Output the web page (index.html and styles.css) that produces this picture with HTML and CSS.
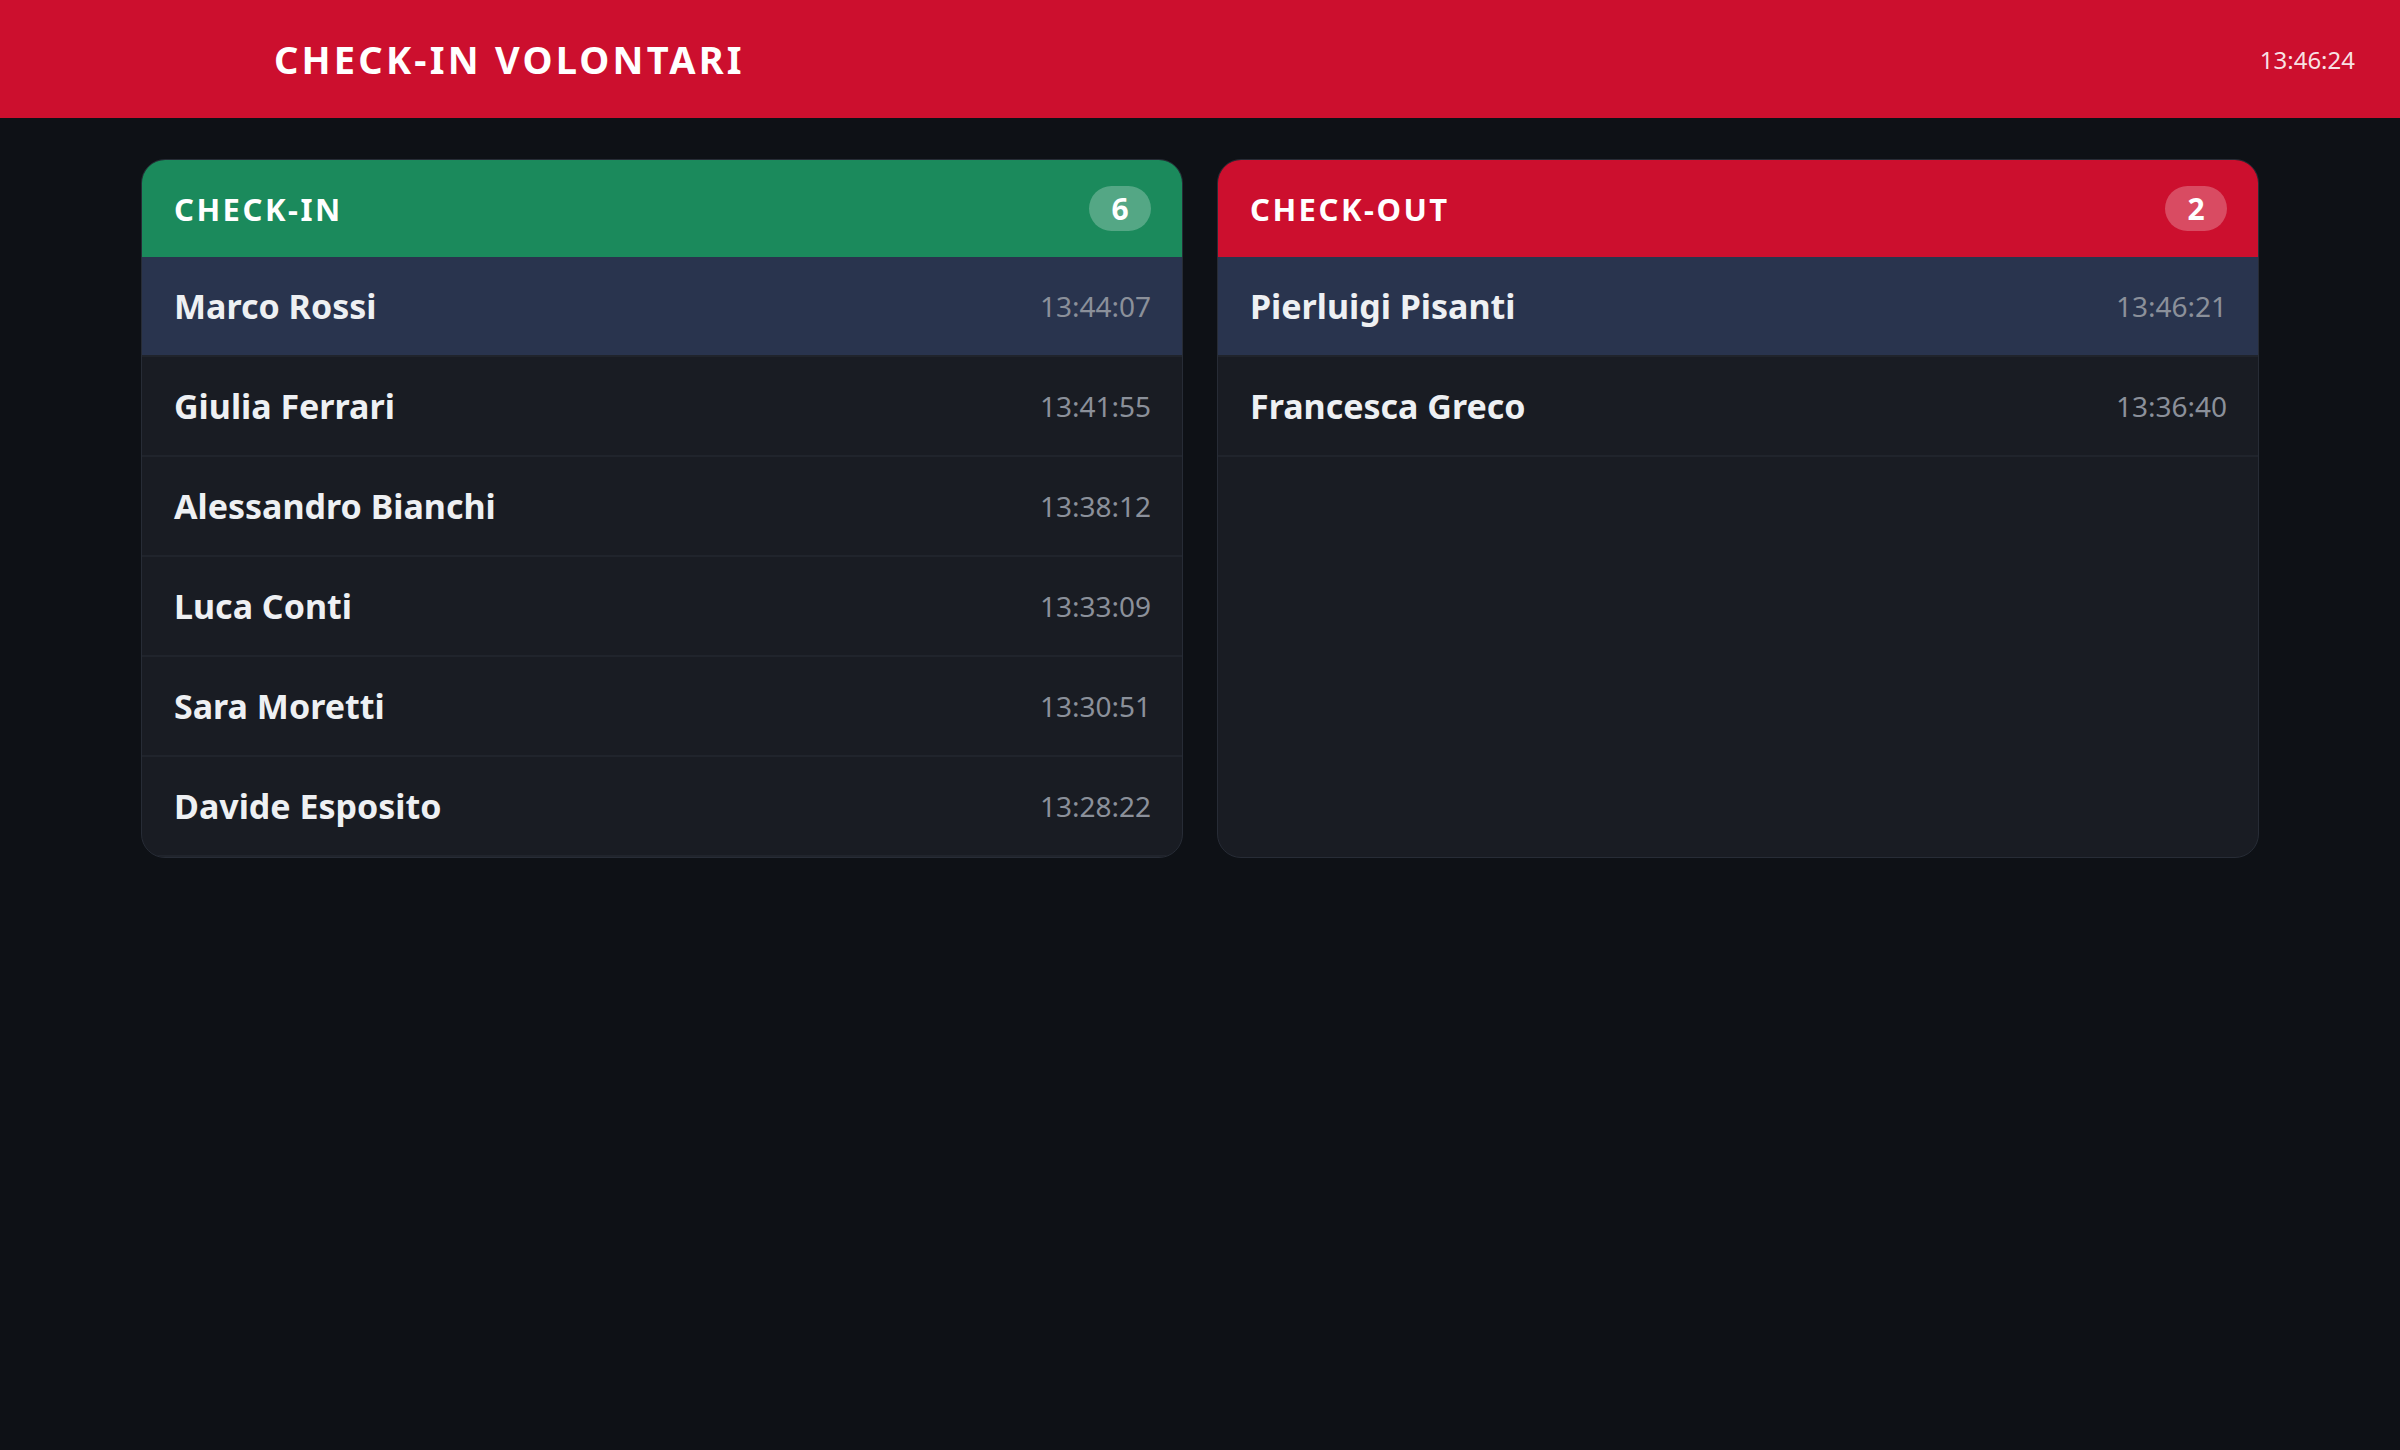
FILE: index.html
```html
<!DOCTYPE html>
<html lang="it">
<head>
  <meta charset="UTF-8">
  <meta name="viewport" content="width=device-width, initial-scale=1">
  <title>Check-in Volontari</title>
  <link rel="stylesheet" href="styles.css">
</head>
<body>
  <header class="topbar">
    <h1 class="topbar-title">CHECK-IN VOLONTARI</h1>
    <div class="topbar-clock" id="clock">13:46:24</div>
  </header>

  <main class="boards">
    <section class="board board-in">
      <div class="board-head">
        <h2>CHECK-IN</h2>
        <span class="count">6</span>
      </div>
      <ul class="board-list">
        <li class="entry latest"><span class="name">Marco Rossi</span><span class="time">13:44:07</span></li>
        <li class="entry"><span class="name">Giulia Ferrari</span><span class="time">13:41:55</span></li>
        <li class="entry"><span class="name">Alessandro Bianchi</span><span class="time">13:38:12</span></li>
        <li class="entry"><span class="name">Luca Conti</span><span class="time">13:33:09</span></li>
        <li class="entry"><span class="name">Sara Moretti</span><span class="time">13:30:51</span></li>
        <li class="entry"><span class="name">Davide Esposito</span><span class="time">13:28:22</span></li>
      </ul>
    </section>

    <section class="board board-out">
      <div class="board-head">
        <h2>CHECK-OUT</h2>
        <span class="count">2</span>
      </div>
      <ul class="board-list">
        <li class="entry latest"><span class="name">Pierluigi Pisanti</span><span class="time">13:46:21</span></li>
        <li class="entry"><span class="name">Francesca Greco</span><span class="time">13:36:40</span></li>
      </ul>
    </section>
  </main>
</body>
</html>
```

FILE: styles.css
```css
* {
  margin: 0;
  padding: 0;
  box-sizing: border-box;
  font-family: 'Noto Sans', 'Open Sans', sans-serif;
}

body {
  background-color: #0e1116;
  min-height: 100vh;
  color: #eef0f3;
}

.topbar {
  height: 118px;
  background-color: #cc0f2e;
  display: flex;
  align-items: center;
  justify-content: space-between;
  padding: 0 45px 0 274px;
}

.topbar-title {
  color: #fff;
  font-size: 38px;
  font-weight: 700;
  letter-spacing: 3.2px;
}

.topbar-clock {
  color: rgba(255, 255, 255, 0.88);
  font-size: 24px;
}

.boards {
  display: grid;
  grid-template-columns: 1fr 1fr;
  gap: 34px;
  padding: 41px 141px 0 141px;
}

.board {
  background-color: #191c23;
  border: 1.5px solid #272c36;
  border-radius: 24px;
  overflow: hidden;
}

.board-head {
  height: 97px;
  display: flex;
  align-items: center;
  justify-content: space-between;
  padding: 0 31px 0 32px;
}

.board-in .board-head {
  background-color: #1b8a5c;
}

.board-out .board-head {
  background-color: #cc0f2e;
}

.board-head h2 {
  color: #fff;
  font-size: 31px;
  font-weight: 700;
  letter-spacing: 2.5px;
}

.count {
  min-width: 62px;
  height: 45px;
  border-radius: 23px;
  background-color: rgba(255, 255, 255, 0.25);
  color: #fff;
  font-size: 30px;
  font-weight: 700;
  display: flex;
  align-items: center;
  justify-content: center;
  padding: 0 18px;
}

.board-list {
  list-style: none;
}

.entry {
  height: 100px;
  display: flex;
  align-items: center;
  justify-content: space-between;
  padding: 0 31px 0 32px;
  border-bottom: 2px solid #20242c;
}

.entry.latest {
  background-color: #29344e;
}

.name {
  font-size: 34px;
  font-weight: 700;
  color: #eef0f3;
}

.time {
  font-size: 28px;
  color: #8b909a;
}
```
